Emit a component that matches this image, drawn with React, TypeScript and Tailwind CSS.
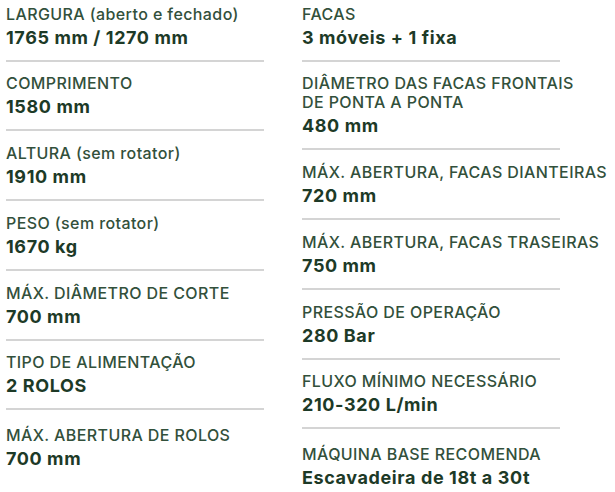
import React from "react";

type Item = { label: string[]; value: string };

const left: Item[] = [
  { label: ["LARGURA (aberto e fechado)"], value: "1765 mm / 1270 mm" },
  { label: ["COMPRIMENTO"], value: "1580 mm" },
  { label: ["ALTURA (sem rotator)"], value: "1910 mm" },
  { label: ["PESO (sem rotator)"], value: "1670 kg" },
  { label: ["MÁX. DIÂMETRO DE CORTE"], value: "700 mm" },
  { label: ["TIPO DE ALIMENTAÇÃO"], value: "2 ROLOS" },
  { label: ["MÁX. ABERTURA DE ROLOS"], value: "700 mm" },
];

const right: Item[] = [
  { label: ["FACAS"], value: "3 móveis + 1 fixa" },
  { label: ["DIÂMETRO DAS FACAS FRONTAIS", "DE PONTA A PONTA"], value: "480 mm" },
  { label: ["MÁX. ABERTURA, FACAS DIANTEIRAS"], value: "720 mm" },
  { label: ["MÁX. ABERTURA, FACAS TRASEIRAS"], value: "750 mm" },
  { label: ["PRESSÃO DE OPERAÇÃO"], value: "280 Bar" },
  { label: ["FLUXO MÍNIMO NECESSÁRIO"], value: "210-320 L/min" },
  { label: ["MÁQUINA BASE RECOMENDA"], value: "Escavadeira de 18t a 30t" },
];

function padTop(i: number, n: number) {
  if (i === 0) return "pt-[5px] ";
  if (i === n - 1) return "pt-[16px] ";
  if (i >= 2 && i <= 4) return "pt-[13px] ";
  return "pt-[12px] ";
}

function Column({ items }: { items: Item[] }) {
  return (
    <div className="flex w-[258px] flex-col">
      {items.map((it, i) => {
        const last = i === items.length - 1;
        return (
          <div
            key={i}
            className={
              padTop(i, items.length) +
              (last ? "" : "border-b-2 border-[#d4d4d4] pb-[11px]")
            }
          >
            <div className="whitespace-nowrap text-[16px] font-medium leading-[19px] tracking-[0.4px] text-[#32503b]">
              {it.label.map((l, j) => (
                <div key={j}>{l}</div>
              ))}
            </div>
            <div className="mt-[3px] whitespace-nowrap text-[18px] font-bold leading-[22px] tracking-[0.6px] text-[#1d3a27]">
              {it.value}
            </div>
          </div>
        );
      })}
    </div>
  );
}

export default function App() {
  return (
    <div
      className="min-h-[492px] w-[615px] bg-white"
      style={{ fontFamily: "Inter, 'Noto Sans', sans-serif" }}
    >
      <div className="flex gap-[38px] pl-[6px]">
        <Column items={left} />
        <Column items={right} />
      </div>
    </div>
  );
}
